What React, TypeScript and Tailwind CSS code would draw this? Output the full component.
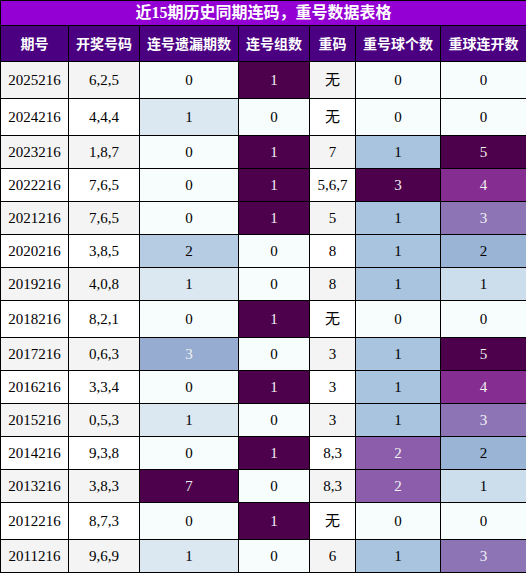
import React from "react";

interface Row {
  period: string;
  draw: string;
  missed: number;
  groups: number;
  repeat: string;
  repeatCount: number;
  streak: number;
}

const rows: Row[] = [
  { period: "2025216", draw: "6,2,5", missed: 0, groups: 1, repeat: "无", repeatCount: 0, streak: 0 },
  { period: "2024216", draw: "4,4,4", missed: 1, groups: 0, repeat: "无", repeatCount: 0, streak: 0 },
  { period: "2023216", draw: "1,8,7", missed: 0, groups: 1, repeat: "7", repeatCount: 1, streak: 5 },
  { period: "2022216", draw: "7,6,5", missed: 0, groups: 1, repeat: "5,6,7", repeatCount: 3, streak: 4 },
  { period: "2021216", draw: "7,6,5", missed: 0, groups: 1, repeat: "5", repeatCount: 1, streak: 3 },
  { period: "2020216", draw: "3,8,5", missed: 2, groups: 0, repeat: "8", repeatCount: 1, streak: 2 },
  { period: "2019216", draw: "4,0,8", missed: 1, groups: 0, repeat: "8", repeatCount: 1, streak: 1 },
  { period: "2018216", draw: "8,2,1", missed: 0, groups: 1, repeat: "无", repeatCount: 0, streak: 0 },
  { period: "2017216", draw: "0,6,3", missed: 3, groups: 0, repeat: "3", repeatCount: 1, streak: 5 },
  { period: "2016216", draw: "3,3,4", missed: 0, groups: 1, repeat: "3", repeatCount: 1, streak: 4 },
  { period: "2015216", draw: "0,5,3", missed: 1, groups: 0, repeat: "3", repeatCount: 1, streak: 3 },
  { period: "2014216", draw: "9,3,8", missed: 0, groups: 1, repeat: "8,3", repeatCount: 2, streak: 2 },
  { period: "2013216", draw: "3,8,3", missed: 7, groups: 0, repeat: "8,3", repeatCount: 2, streak: 1 },
  { period: "2012216", draw: "8,7,3", missed: 0, groups: 1, repeat: "无", repeatCount: 0, streak: 0 },
  { period: "2011216", draw: "9,6,9", missed: 1, groups: 0, repeat: "6", repeatCount: 1, streak: 3 },
];

// BuPu 色阶，按列最大值取色
const missedColors: Record<number, string> = {
  0: "bg-[#f7fcfd] text-black",
  1: "bg-[#dbe8f2] text-black",
  2: "bg-[#b6cce3] text-black",
  3: "bg-[#96acd1] text-[#f1f1f1]",
  7: "bg-[#4d004b] text-[#f1f1f1]",
};

const groupColors: Record<number, string> = {
  0: "bg-[#f7fcfd] text-black",
  1: "bg-[#4d004b] text-[#f1f1f1]",
};

const countColors: Record<number, string> = {
  0: "bg-[#f7fcfd] text-black",
  1: "bg-[#a9c4de] text-black",
  2: "bg-[#8b5daa] text-[#f1f1f1]",
  3: "bg-[#4d004b] text-[#f1f1f1]",
};

const streakColors: Record<number, string> = {
  0: "bg-[#f7fcfd] text-black",
  1: "bg-[#ccddec] text-black",
  2: "bg-[#9ab4d6] text-black",
  3: "bg-[#8c74b5] text-[#f1f1f1]",
  4: "bg-[#852d90] text-[#f1f1f1]",
  5: "bg-[#4d004b] text-[#f1f1f1]",
};

const headers = ["期号", "开奖号码", "连号遗漏期数", "连号组数", "重码", "重号球个数", "重球连开数"];

const App: React.FC = () => {
  return (
    <div className="w-[526px] font-['Liberation_Serif','Noto_Sans_CJK_SC',serif]">
      <table className="w-[526px] table-fixed border-collapse text-[15px] text-center">
        <colgroup>
          <col className="w-[68px]" />
          <col className="w-[71px]" />
          <col className="w-[99px]" />
          <col className="w-[71px]" />
          <col className="w-[46px]" />
          <col className="w-[85px]" />
          <col className="w-[86px]" />
        </colgroup>
        <thead>
          <tr className="h-[25px]">
            <th
              colSpan={7}
              className="border border-black bg-[#9400d3] text-white text-[16px] font-bold p-0 leading-none"
            >
              近15期历史同期连码，重号数据表格
            </th>
          </tr>
          <tr className="h-[36px]">
            {headers.map((h) => (
              <th
                key={h}
                className="border border-black bg-[#4b0082] text-white text-[14px] font-bold p-0 font-['Noto_Sans_CJK_SC',sans-serif]"
              >
                {h}
              </th>
            ))}
          </tr>
        </thead>
        <tbody>
          {rows.map((r, i) => {
            const stripe = i % 2 === 0 ? "bg-[#f4f4f4]" : "bg-white";
            const tall = r.repeat === "无";
            return (
              <tr key={r.period} className={tall ? "h-[37px]" : "h-[33px]"}>
                <td className={`border border-black p-0 text-black ${stripe}`}>{r.period}</td>
                <td className={`border border-black p-0 text-black ${stripe}`}>{r.draw}</td>
                <td className={`border border-black p-0 ${missedColors[r.missed]}`}>{r.missed}</td>
                <td className={`border border-black p-0 ${groupColors[r.groups]}`}>{r.groups}</td>
                <td className={`border border-black p-0 text-black ${stripe}`}>{r.repeat}</td>
                <td className={`border border-black p-0 ${countColors[r.repeatCount]}`}>{r.repeatCount}</td>
                <td className={`border border-black p-0 ${streakColors[r.streak]}`}>{r.streak}</td>
              </tr>
            );
          })}
        </tbody>
      </table>
    </div>
  );
};

export default App;
